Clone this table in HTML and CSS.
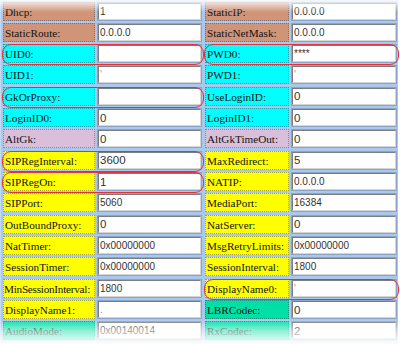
FILE: index.html
```html
<!DOCTYPE html>
<html>
<head>
<meta charset="utf-8">
<link rel="stylesheet" href="styles.css">
</head>
<body>
<div class="frame">
  <div class="sheet">
    <div class="field"><span class="lbl brown">Dhcp:</span><span class="val"><span class="box">1</span></span></div>
    <div class="field r"><span class="lbl brown">StaticIP:</span><span class="val"><span class="box">0.0.0.0</span></span></div>

    <div class="field"><span class="lbl brown">StaticRoute:</span><span class="val"><span class="box">0.0.0.0</span></span></div>
    <div class="field r"><span class="lbl brown">StaticNetMask:</span><span class="val"><span class="box">0.0.0.0</span></span></div>

    <div class="field hl"><span class="lbl cyan">UID0:</span><span class="val"><span class="box"></span></span></div>
    <div class="field r hl"><span class="lbl cyan">PWD0:</span><span class="val"><span class="box">****</span></span></div>

    <div class="field"><span class="lbl cyan">UID1:</span><span class="val"><span class="box tick">'</span></span></div>
    <div class="field r"><span class="lbl cyan">PWD1:</span><span class="val"><span class="box tick">'</span></span></div>

    <div class="field hl"><span class="lbl cyan">GkOrProxy:</span><span class="val"><span class="box"></span></span></div>
    <div class="field r"><span class="lbl cyan">UseLoginID:</span><span class="val"><span class="box big">0</span></span></div>

    <div class="field"><span class="lbl cyan">LoginID0:</span><span class="val"><span class="box big">0</span></span></div>
    <div class="field r"><span class="lbl cyan">LoginID1:</span><span class="val"><span class="box big">0</span></span></div>

    <div class="field"><span class="lbl lilac">AltGk:</span><span class="val"><span class="box big">0</span></span></div>
    <div class="field r"><span class="lbl lilac">AltGkTimeOut:</span><span class="val"><span class="box big">0</span></span></div>

    <div class="field hl"><span class="lbl yellow">SIPRegInterval:</span><span class="val"><span class="box big">3600</span></span></div>
    <div class="field r"><span class="lbl yellow">MaxRedirect:</span><span class="val"><span class="box big">5</span></span></div>

    <div class="field hl"><span class="lbl yellow">SIPRegOn:</span><span class="val"><span class="box big">1</span></span></div>
    <div class="field r"><span class="lbl yellow">NATIP:</span><span class="val"><span class="box">0.0.0.0</span></span></div>

    <div class="field"><span class="lbl yellow">SIPPort:</span><span class="val"><span class="box">5060</span></span></div>
    <div class="field r"><span class="lbl yellow">MediaPort:</span><span class="val"><span class="box">16384</span></span></div>

    <div class="field"><span class="lbl yellow">OutBoundProxy:</span><span class="val"><span class="box big">0</span></span></div>
    <div class="field r"><span class="lbl yellow">NatServer:</span><span class="val"><span class="box big">0</span></span></div>

    <div class="field"><span class="lbl yellow">NatTimer:</span><span class="val"><span class="box">0x00000000</span></span></div>
    <div class="field r"><span class="lbl yellow">MsgRetryLimits:</span><span class="val"><span class="box">0x00000000</span></span></div>

    <div class="field"><span class="lbl yellow">SessionTimer:</span><span class="val"><span class="box">0x00000000</span></span></div>
    <div class="field r"><span class="lbl yellow">SessionInterval:</span><span class="val"><span class="box">1800</span></span></div>

    <div class="field"><span class="lbl yellow tight">MinSessionInterval:</span><span class="val"><span class="box">1800</span></span></div>
    <div class="field r hl"><span class="lbl yellow">DisplayName0:</span><span class="val"><span class="box tick">'</span></span></div>

    <div class="field"><span class="lbl yellow">DisplayName1:</span><span class="val"><span class="box tick">.</span></span></div>
    <div class="field r"><span class="lbl teal">LBRCodec:</span><span class="val"><span class="box big">0</span></span></div>

    <div class="field"><span class="lbl teal">AudioMode:</span><span class="val"><span class="box">0x00140014</span></span></div>
    <div class="field r"><span class="lbl teal">RxCodec:</span><span class="val"><span class="box big">2</span></span></div>
  </div>
  <div class="fade-top"></div>
  <div class="fade-bottom"></div>
</div>
</body>
</html>
```

FILE: styles.css
```css
html, body {
  margin: 0;
  padding: 0;
  background: #ffffff;
}

.frame {
  position: relative;
  width: 400px;
  height: 345px;
  overflow: hidden;
}

.sheet {
  display: grid;
  grid-template-columns: 199px 192px;
  grid-auto-rows: 19px;
  column-gap: 3px;
  row-gap: 2.33px;
  padding: 1.5px 1px 4px 3px;
  width: max-content;
  background: #a9c8ee;
  box-shadow: inset 1px 0 0 #c4daf4;
}

.field {
  position: relative;
  display: flex;
  gap: 2px;
}

.lbl {
  box-sizing: border-box;
  width: 92px;
  flex: none;
  display: flex;
  align-items: center;
  padding-left: 1px;
  padding-top: 1px;
  font-family: "Liberation Serif", "Times New Roman", serif;
  font-size: 11.2px;
  color: #141414;
  white-space: nowrap;
  border: 1px dotted rgba(60, 60, 80, 0.45);
}

.lbl.tight {
  padding-left: 0;
  letter-spacing: -0.25px;
}

.field.r .lbl {
  width: 84px;
}

.val {
  box-sizing: border-box;
  flex: 1;
  display: flex;
  border: 1px solid #8aa3c6;
  background: #c9dcf3;
}

.box {
  box-sizing: border-box;
  flex: 1;
  display: flex;
  align-items: center;
  padding-left: 1px;
  background: #ffffff;
  border-top: 1px solid #7c7c7c;
  border-left: 1px solid #7c7c7c;
  border-right: 1px solid #d6d6d6;
  border-bottom: 1px solid #d6d6d6;
  font-family: "Liberation Sans", Arial, sans-serif;
  font-size: 10px;
  color: #333333;
  white-space: nowrap;
}

.box.big {
  font-size: 11.5px;
}

.box.tick {
  color: #999999;
  font-size: 10px;
}

.brown { background: #d09479; }
.cyan { background: #00ffff; }
.lilac { background: #d9bfd9; }
.yellow { background: #ffff00; }
.teal { background: #00dfa5; }

.field.hl::after {
  content: "";
  position: absolute;
  top: 0;
  bottom: -2px;
  left: -1.5px;
  right: -1.5px;
  border: 1.5px solid #e2323c;
  border-radius: 9px;
  pointer-events: none;
}

.fade-top {
  position: absolute;
  left: 0;
  right: 0;
  top: 0;
  height: 12px;
  background: linear-gradient(to bottom, rgba(255, 255, 255, 0.9), rgba(255, 255, 255, 0));
}

.fade-bottom {
  position: absolute;
  left: 0;
  right: 0;
  bottom: 0;
  height: 26px;
  background: linear-gradient(to bottom, rgba(255, 255, 255, 0) 0%, rgba(255, 255, 255, 0.55) 45%, #ffffff 100%);
}
```
